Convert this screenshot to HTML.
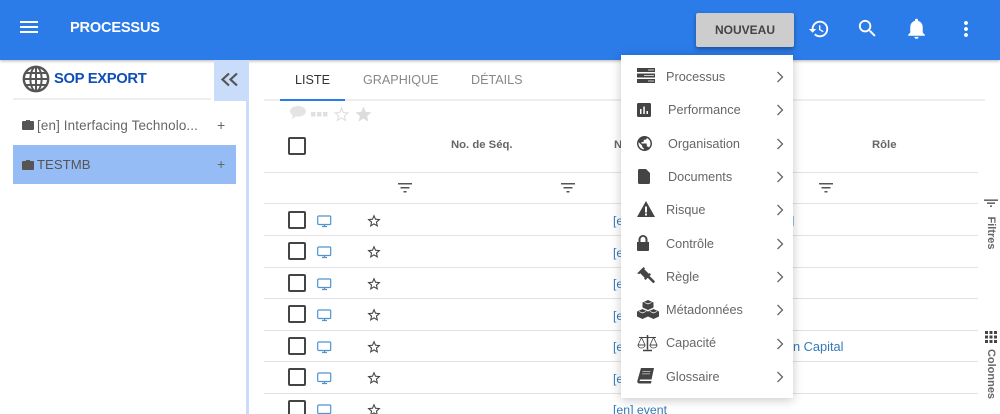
<!DOCTYPE html>
<html><head><meta charset="utf-8"><style>
html,body{margin:0;padding:0;background:#fff}
#p{position:relative;width:1000px;height:414px;overflow:hidden;background:#fff;font-family:"Liberation Sans",sans-serif;color:#666;filter:blur(.3px)}
#p div,#p svg,#p span.a{position:absolute}
.t{white-space:nowrap;line-height:16px}
.l{left:264px;width:714px;height:1px;background:#e2e2e2}
.cb{left:288px;width:14px;height:14px;border:2px solid #444;border-radius:2px}
.m{left:666px;margin-top:1px;font-size:12.7px;color:#666;white-space:nowrap;line-height:16px}
.lk{left:613px;font-size:12.3px;color:#337ab7;line-height:16px;white-space:nowrap}
</style></head><body><div id="p">
<!-- header -->
<div style="left:0;top:0;width:1000px;height:60px;background:#2b7be9;box-shadow:0 1px 3px rgba(0,0,0,.3)"></div>
<svg style="left:17px;top:15px" width="24" height="24" viewBox="0 0 24 24" fill="#fff"><path d="M3 18h18v-2H3v2zm0-5h18v-2H3v2zm0-7v2h18V6H3z"/></svg>
<div class="t" style="left:70px;top:20px;font-size:14.6px;font-weight:bold;color:#fff;letter-spacing:-.2px">PROCESSUS</div>
<div style="left:696px;top:13px;width:98px;height:34px;background:#cdcdcd;border-radius:2px;box-shadow:0 2px 5px rgba(0,0,0,.35)"></div>
<div class="t" style="left:696px;top:22px;width:98px;text-align:center;font-size:12px;font-weight:bold;color:#444">NOUVEAU</div>
<svg style="left:808px;top:18px" width="22" height="22" viewBox="0 0 24 24" fill="#fff"><path d="M13 3c-4.97 0-9 4.03-9 9H1l3.89 3.89.07.14L9 12H6c0-3.87 3.13-7 7-7s7 3.13 7 7-3.13 7-7 7c-1.93 0-3.68-.79-4.94-2.06l-1.42 1.42C8.27 19.99 10.51 21 13 21c4.97 0 9-4.03 9-9s-4.03-9-9-9zm-1 5v5l4.28 2.54.72-1.21-3.5-2.08V8H12z"/></svg>
<svg style="left:856px;top:17px" width="23" height="23" viewBox="0 0 24 24" fill="#fff"><path d="M15.5 14h-.79l-.28-.27C15.41 12.59 16 11.11 16 9.5 16 5.91 13.09 3 9.5 3S3 5.91 3 9.5 5.91 16 9.5 16c1.61 0 3.09-.59 4.23-1.57l.27.28v.79l5 4.99L20.49 19l-4.99-5zm-6 0C7.01 14 5 11.99 5 9.5S7.01 5 9.5 5 14 7.01 14 9.5 11.99 14 9.500 14z"/></svg>
<svg style="left:904px;top:16px" width="25" height="25" viewBox="0 0 24 24" fill="#fff"><path d="M12 22c1.100 0 2-.9 2-2h-4c0 1.100.89 2 2 2zm6-6v-5c0-3.070-1.640-5.640-4.500-6.320V4c0-.83-.67-1.500-1.500-1.500s-1.500.67-1.500 1.500v.68C7.630 5.360 6 7.920 6 11v5l-2 2v1h16v-1l-2-2z"/></svg>
<svg style="left:954px;top:17px" width="24" height="24" viewBox="0 0 24 24" fill="#fff"><path d="M12 8c1.100 0 2-.9 2-2s-.9-2-2-2-2 .9-2 2 .9 2 2 2zm0 2c-1.100 0-2 .9-2 2s.9 2 2 2 2-.9 2-2-.9-2-2-2zm0 6c-1.100 0-2 .9-2 2s.9 2 2 2 2-.9 2-2-.9-2-2-2z"/></svg>
<!-- sidebar -->
<div style="left:214px;top:60px;width:35px;height:41px;background:#c9dcf9"></div>
<div style="left:246px;top:100px;width:3px;height:314px;background:#c9dcf9"></div>
<div style="left:13px;top:98px;width:198px;height:2px;background:#eee"></div>
<svg style="left:22px;top:65px" width="28" height="28" viewBox="0 0 28 28" fill="none" stroke="#555" stroke-width="2"><circle cx="14" cy="14" r="12.200" stroke-width="2.400"/><ellipse cx="14" cy="14" rx="5.600" ry="12.200"/><path d="M14 2v24M2 14h24M3.600 8h20.800M3.600 20h20.800"/></svg>
<div class="t" style="left:54px;top:71px;font-size:14.800px;font-weight:bold;color:#0f4fb5;letter-spacing:-.35px">SOP EXPORT</div>
<svg style="left:220px;top:71px" width="20" height="18" viewBox="0 0 20 18" fill="none" stroke="#555" stroke-width="2.200"><path d="M9 2.500L2.500 8.500 9 14.500M17 2.500L10.500 8.500 17 14.500"/></svg>
<svg style="left:22px;top:119px" width="12" height="12" viewBox="0 0 12 12" fill="#555"><path d="M4 2V1h4v1h3a1 1 0 0 1 1 1v7a1 1 0 0 1-1 1H1a1 1 0 0 1-1-1V3a1 1 0 0 1 1-1zm1 0h2v-.1H5z"/></svg>
<div class="t" style="left:37px;top:118px;font-size:13.400px;letter-spacing:.15px;color:#666">[en] Interfacing Technolo...</div>
<div class="t" style="left:217px;top:117px;font-size:14px;color:#666">+</div>
<div style="left:13px;top:145px;width:223px;height:39px;background:#95bcf5"></div>
<svg style="left:22px;top:159px" width="12" height="12" viewBox="0 0 12 12" fill="#555"><path d="M4 2V1h4v1h3a1 1 0 0 1 1 1v7a1 1 0 0 1-1 1H1a1 1 0 0 1-1-1V3a1 1 0 0 1 1-1zm1 0h2v-.1H5z"/></svg>
<div class="t" style="left:37px;top:157px;font-size:13.200px;color:#555">TESTMB</div>
<div class="t" style="left:217px;top:156px;font-size:14px;color:#666">+</div>
<!-- tabs -->
<div class="t" style="left:295px;top:72px;font-size:12.600px;color:#333">LISTE</div>
<div class="t" style="left:363px;top:72px;font-size:12.600px;color:#888">GRAPHIQUE</div>
<div class="t" style="left:471px;top:72px;font-size:12.600px;color:#888">DÉTAILS</div>
<div style="left:264px;top:99px;width:721px;height:2px;background:#eee"></div>
<div style="left:280px;top:99px;width:65px;height:2px;background:#2b7be9"></div>
<!-- toolbar -->
<svg style="left:289px;top:105px" width="18" height="16" viewBox="0 0 18 16" fill="#e4e4e4"><path d="M9 1C4.600 1 1 3.300 1 6.300c0 1.800 1.200 3.200 3 4.200-.2 1.200-.9 2.300-1.600 3 1.800-.2 3.400-1 4.500-2.100.7.100 1.400.2 2.100.2 4.400 0 8-2.300 8-5.300S13.400 1 9 1z"/></svg>
<svg style="left:311px;top:111px" width="17" height="6" viewBox="0 0 17 6" fill="#e0e0e0"><rect x="0" y="1" width="4.500" height="4.500"/><rect x="6" y="1" width="4.500" height="4.500"/><rect x="12" y="1" width="4.500" height="4.500"/></svg>
<svg style="left:332px;top:105px" width="19" height="19" viewBox="0 0 24 24" fill="#e2e2e2"><path d="M22 9.240l-7.190-.62L12 2 9.190 8.630 2 9.240l5.460 4.730L5.820 21 12 17.270 18.180 21l-1.630-7.030L22 9.240zM12 15.400l-3.760 2.270 1-4.280-3.320-2.880 4.380-.38L12 6.100l1.710 4.040 4.380.38-3.320 2.880 1 4.280L12 15.400z"/></svg>
<svg style="left:354px;top:105px" width="19" height="19" viewBox="0 0 24 24" fill="#dcdcdc"><path d="M12 17.270L18.180 21l-1.640-7.030L22 9.240l-7.190-.61L12 2 9.190 8.630 2 9.240l5.460 4.730L5.820 21z"/></svg>
<!-- table head -->
<div class="cb" style="top:137px"></div>
<div class="t" style="left:451px;top:137px;font-size:11.300px;font-weight:bold;color:#666">No. de Séq.</div>
<div class="t" style="left:614px;top:137px;font-size:11.300px;font-weight:bold;color:#666">No</div>
<div class="t" style="left:872px;top:137px;font-size:11.300px;font-weight:bold;color:#666">Rôle</div>
<div class="l" style="top:172px"></div>
<svg style="left:396px;top:180px" width="18" height="15" viewBox="0 0 18 15" fill="#555"><rect x="2" y="3" width="14" height="1.500"/><rect x="4.500" y="7" width="9" height="1.500"/><rect x="7.500" y="11" width="3" height="1.500"/></svg>
<svg style="left:559px;top:180px" width="18" height="15" viewBox="0 0 18 15" fill="#555"><rect x="2" y="3" width="14" height="1.500"/><rect x="4.500" y="7" width="9" height="1.500"/><rect x="7.500" y="11" width="3" height="1.500"/></svg>
<svg style="left:817px;top:180px" width="18" height="15" viewBox="0 0 18 15" fill="#555"><rect x="2" y="3" width="14" height="1.500"/><rect x="4.500" y="7" width="9" height="1.500"/><rect x="7.500" y="11" width="3" height="1.500"/></svg>
<div class="l" style="top:203px"></div><div class="l" style="top:235px"></div><div class="l" style="top:267px"></div><div class="l" style="top:298px"></div><div class="l" style="top:330px"></div><div class="l" style="top:361px"></div><div class="l" style="top:393px"></div>
<!-- rows -->
<div class="cb" style="top:211px"></div><div class="cb" style="top:242px"></div><div class="cb" style="top:274px"></div><div class="cb" style="top:305px"></div><div class="cb" style="top:337px"></div><div class="cb" style="top:368px"></div><div class="cb" style="top:400px"></div>
<svg width="0" height="0" style="left:0;top:0"><defs>
<g id="mon"><rect x=".7" y="1" width="13" height="8.500" rx="1" fill="none" stroke="#4f94d0" stroke-width="1.200"/><path d="M5 11.500h5M7.500 9.500v2" stroke="#4f94d0" stroke-width="1.200"/></g>
<path id="st" fill="#444" d="M22 9.240l-7.190-.62L12 2 9.190 8.630 2 9.240l5.460 4.730L5.820 21 12 17.270 18.180 21l-1.630-7.030L22 9.240zM12 15.400l-3.760 2.270 1-4.280-3.320-2.880 4.380-.38L12 6.100l1.710 4.040 4.380.38-3.320 2.880 1 4.280L12 15.400z"/>
</defs></svg>
<svg style="left:317px;top:215px" width="15" height="13"><use href="#mon"/></svg>
<svg style="left:317px;top:246px" width="15" height="13"><use href="#mon"/></svg>
<svg style="left:317px;top:278px" width="15" height="13"><use href="#mon"/></svg>
<svg style="left:317px;top:309px" width="15" height="13"><use href="#mon"/></svg>
<svg style="left:317px;top:341px" width="15" height="13"><use href="#mon"/></svg>
<svg style="left:317px;top:372px" width="15" height="13"><use href="#mon"/></svg>
<svg style="left:317px;top:404px" width="15" height="13"><use href="#mon"/></svg>
<svg style="left:366px;top:213px" width="16" height="16" viewBox="0 0 24 24"><use href="#st"/></svg>
<svg style="left:366px;top:244px" width="16" height="16" viewBox="0 0 24 24"><use href="#st"/></svg>
<svg style="left:366px;top:276px" width="16" height="16" viewBox="0 0 24 24"><use href="#st"/></svg>
<svg style="left:366px;top:307px" width="16" height="16" viewBox="0 0 24 24"><use href="#st"/></svg>
<svg style="left:366px;top:339px" width="16" height="16" viewBox="0 0 24 24"><use href="#st"/></svg>
<svg style="left:366px;top:370px" width="16" height="16" viewBox="0 0 24 24"><use href="#st"/></svg>
<svg style="left:366px;top:402px" width="16" height="16" viewBox="0 0 24 24"><use href="#st"/></svg>
<div class="lk" style="top:213px">[en]</div><div class="lk" style="top:245px">[en]</div><div class="lk" style="top:276px">[en]</div><div class="lk" style="top:308px">[en]</div><div class="lk" style="top:339px">[en]</div><div class="lk" style="top:371px">[en]</div><div class="lk" style="top:402px">[en] event</div>
<div class="lk" style="left:793px;top:339px;width:50px;text-align:right;font-size:12.800px">n Capital</div>
<div style="left:793px;top:216px;width:1px;height:10px;background:#9cc3e4"></div>
<!-- right rail -->
<svg style="left:983px;top:197px" width="16" height="14" viewBox="0 0 16 14" fill="#444"><rect x="1" y="2.500" width="14" height="1.300"/><rect x="4" y="5.500" width="8" height="1.300"/><rect x="7" y="8.500" width="2" height="1.300"/></svg>
<div class="t" style="left:963px;top:225px;width:56px;text-align:center;font-size:11px;font-weight:bold;color:#666;transform:rotate(90deg)">Filtres</div>
<svg style="left:985px;top:331px" width="13" height="13" fill="#444"><path d="M0 0h3v3H0zM4.500 0h3v3h-3zM9 0h3v3H9zM0 4.500h3v3H0zM4.500 4.500h3v3h-3zM9 4.500h3v3H9zM0 9h3v3H0zM4.500 9h3v3h-3zM9 9h3v3H9z"/></svg>
<div class="t" style="left:961px;top:366px;width:60px;text-align:center;font-size:11px;font-weight:bold;color:#666;transform:rotate(90deg)">Colonnes</div>
<!-- menu -->
<div style="left:621px;top:55px;width:172px;height:343px;background:#fff;box-shadow:0 2px 10px rgba(0,0,0,.22)"></div>
<svg style="left:637px;top:68px" width="18" height="15" viewBox="0 0 18 15"><path fill="#444" d="M0 0h18v4H0zM0 5.500h18v4H0zM0 11h18v4H0z"/><path fill="#ccc" d="M11 1.500h6v1h-6zM7 7h10v1H7zM11 12.500h6v1h-6z"/></svg>
<svg style="left:637px;top:103px" width="14" height="14" viewBox="0 0 14 14"><rect width="14" height="14" rx="1.500" fill="#444"/><path fill="#fff" d="M3 6h1.500v5H3zM6.300 3.500h1.500V11H6.300zM9.500 8H11v3H9.500z"/></svg>
<svg style="left:637px;top:136px" width="15" height="15" viewBox="0 0 24 24" fill="#444"><path d="M12 0C5.400 0 0 5.400 0 12s5.400 12 12 12 12-5.400 12-12S18.600 0 12 0zM10.800 21.500C6.100 20.900 2.400 16.900 2.400 12c0-.7.100-1.500.3-2.100L8.400 15.600v1.200c0 1.300 1.100 2.400 2.400 2.400v2.300zm8.300-3c-.3-1-1.200-1.700-2.300-1.700h-1.200v-3.600c0-.7-.5-1.200-1.200-1.200H7.200V9.600h2.400c.7 0 1.200-.5 1.200-1.200V6h2.400c1.300 0 2.400-1.100 2.400-2.400v-.5c3.500 1.400 6 4.800 6 8.900 0 2.500-1 4.800-2.500 6.500z"/></svg>
<svg style="left:638px;top:169px" width="12" height="15" viewBox="0 0 12 15" fill="#444"><path d="M1.500 0H8l4 4v9.500a1.500 1.500 0 0 1-1.500 1.500h-9A1.500 1.500 0 0 1 0 13.500v-12A1.500 1.500 0 0 1 1.500 0z"/></svg>
<svg style="left:637px;top:200px" width="18" height="18" viewBox="0 0 18 18"><path fill="#444" d="M9 1l9 16H0z"/><path fill="#fff" d="M8 6.500h2v6H8zM8 13.500h2v2H8z"/></svg>
<svg style="left:637px;top:235px" width="12" height="16" viewBox="0 0 12 16"><path fill="#444" d="M0 7h1.500V4.500a4.500 4.500 0 0 1 9 0V7H12v8a1 1 0 0 1-1 1H1a1 1 0 0 1-1-1zM3.500 7h5V4.500a2.500 2.700 0 0 0-5 0z"/></svg>
<svg style="left:637px;top:267px" width="18" height="18" viewBox="0 0 18 18" fill="#444"><path d="M0 7.500L6.500 1 8 2.500l-.7.700 4.500 4.500.7-.7L14 8.500 8.500 14 7 12.500l.7-.7-4.500-4.500-.7.700z" transform="translate(0 -1)"/><path d="M9.500 7.500l1.800-1.800 6.200 6.200a1.300 1.300 0 0 1-1.800 1.800z" transform="translate(0 2)"/></svg>
<svg style="left:637px;top:300px" width="22" height="20" viewBox="0 0 22 20" fill="#444"><path d="M11 0l5.500 2.500v5L11 10 5.500 7.500v-5z"/><path d="M5.500 9L11 11.500v5L5.500 19 0 16.500v-5z"/><path d="M16.500 9L22 11.500v5L16.500 19 11 16.500v-5z"/><path fill="#fff" d="M7 2.600l4 1.800 4-1.800-.6-.3L11 3.500 7.600 2.300zM1.500 11.600l4 1.800 4-1.800-.6-.3-3.400 1.200-3.400-1.200zM12.500 11.600l4 1.800 4-1.800-.6-.3-3.400 1.200-3.400-1.200z"/></svg>
<svg style="left:637px;top:334px" width="21" height="18" viewBox="0 0 21 18" fill="none" stroke="#444" stroke-width="1"><path d="M10.500 1v14.500M6 16.500h9" stroke-width="1.500"/><path d="M2 3.500h17"/><path d="M4.500 3.500L1 11h7zM16.500 3.500L13 11h7z" stroke-width=".8"/><path d="M1 11a3.500 3 0 0 0 7 0zM13 11a3.500 3 0 0 0 7 0z" stroke-width=".8"/></svg>
<svg style="left:637px;top:368px" width="17" height="16" viewBox="0 0 17 16"><path fill="#444" d="M4 0h13l-2.500 11.500H3.500c-.9 0-1.300 1.500-.2 1.500h11.200l-.5 2.500H2.500C.9 15.500 0 14.300.3 13z"/><path fill="#ccc" d="M5.500 3h8l-.1.800h-8zM5 5.500h8l-.1.800h-8z"/></svg>
<div class="m" style="top:68px">Processus</div>
<div class="m" style="left:668px;top:101px">Performance</div>
<div class="m" style="left:668px;top:135px">Organisation</div>
<div class="m" style="left:668px;top:168px">Documents</div>
<div class="m" style="top:201px">Risque</div>
<div class="m" style="top:235px">Contrôle</div>
<div class="m" style="top:268px">Règle</div>
<div class="m" style="top:301px">Métadonnées</div>
<div class="m" style="top:334px">Capacité</div>
<div class="m" style="top:368px">Glossaire</div>
<svg width="0" height="0" style="left:0;top:0"><defs><path id="ch" d="M1.500 1L6.500 6 1.500 11" fill="none" stroke="#666" stroke-width="1.300"/></defs></svg>
<svg style="left:776px;top:71px" width="8" height="12"><use href="#ch"/></svg>
<svg style="left:776px;top:104px" width="8" height="12"><use href="#ch"/></svg>
<svg style="left:776px;top:138px" width="8" height="12"><use href="#ch"/></svg>
<svg style="left:776px;top:171px" width="8" height="12"><use href="#ch"/></svg>
<svg style="left:776px;top:204px" width="8" height="12"><use href="#ch"/></svg>
<svg style="left:776px;top:238px" width="8" height="12"><use href="#ch"/></svg>
<svg style="left:776px;top:271px" width="8" height="12"><use href="#ch"/></svg>
<svg style="left:776px;top:304px" width="8" height="12"><use href="#ch"/></svg>
<svg style="left:776px;top:338px" width="8" height="12"><use href="#ch"/></svg>
<svg style="left:776px;top:371px" width="8" height="12"><use href="#ch"/></svg>
</div></body></html>
